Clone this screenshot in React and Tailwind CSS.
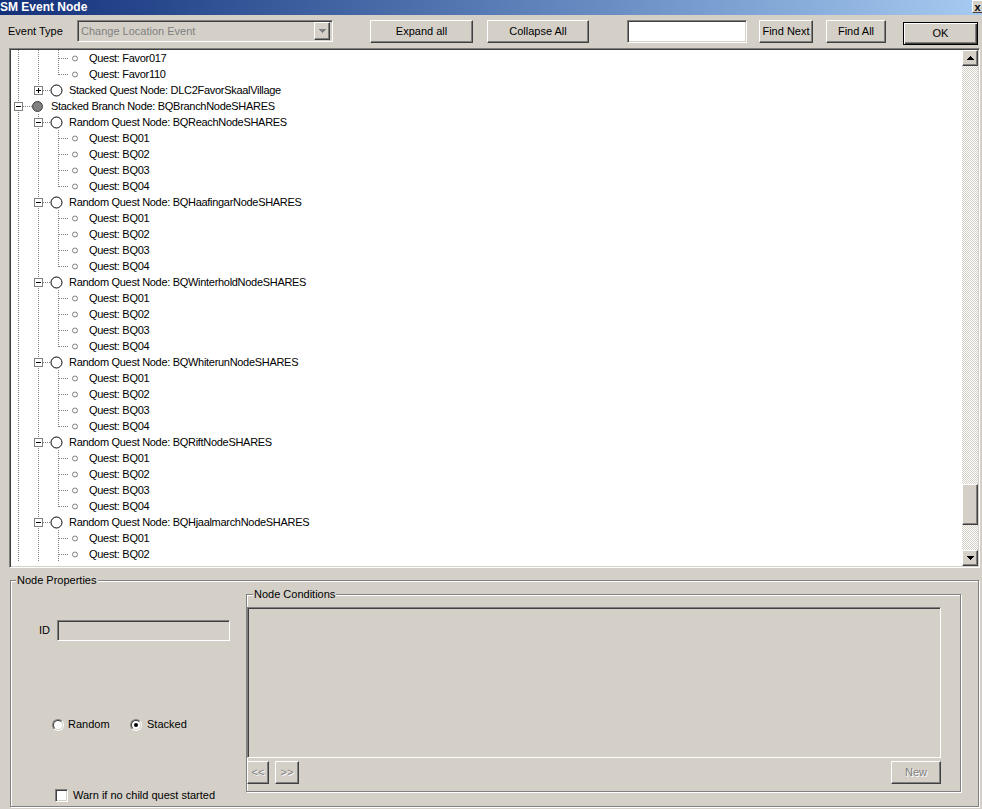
import React from "react";

const raised =
  "border border-t-white border-l-white border-r-[#404040] border-b-[#404040] shadow-[inset_-1px_-1px_0_#808080] bg-[#d4d0c8]";
const sunken =
  "border border-t-[#808080] border-l-[#808080] border-r-white border-b-white shadow-[inset_1px_1px_0_#404040,inset_-1px_-1px_0_#d4d0c8]";
const disabledText = "text-[#808080] [text-shadow:1px_1px_0_#fff]";

const regions = ["Reach", "Haafingar", "Winterhold", "Whiterun", "Rift", "Hjaalmarch"];

const rows = [
  { level: 2, label: "Quest: Favor017", guides: [true, true] },
  { level: 2, label: "Quest: Favor110", guides: [true, true], last: true },
  {
    level: 1,
    label: "Stacked Quest Node: DLC2FavorSkaalVillage",
    guides: [true],
    last: true,
    exp: "+",
  },
  { level: 0, label: "Stacked Branch Node: BQBranchNodeSHARES", guides: [], exp: "-" },
  ...regions.flatMap((r, i) => {
    const quests = i === regions.length - 1 ? ["BQ01", "BQ02"] : ["BQ01", "BQ02", "BQ03", "BQ04"];
    return [
      { level: 1, label: `Random Quest Node: BQ${r}NodeSHARES`, guides: [true], exp: "-" },
      ...quests.map((q, j) => ({
        level: 2,
        label: `Quest: ${q}`,
        guides: [true, true],
        last: i !== regions.length - 1 && j === quests.length - 1,
      })),
    ];
  }),
];

// x of each level's guide line, inside the row glyph area
const LINE_X = [7, 27, 47];
const GLYPH_W = [40, 58, 78];

function TreeGlyphs({ row }) {
  const L = row.level;
  const x = LINE_X[L] + 0.5;
  const dot = { stroke: "#808080", strokeDasharray: "1 1", shapeRendering: "crispEdges" };
  const connectorEnd = L === 0 ? 21 : L === 1 ? 40 : 57;
  return (
    <svg width={GLYPH_W[L]} height={16} className="shrink-0">
      {row.guides.map((g, i) =>
        g ? <line key={i} x1={LINE_X[i] + 0.5} y1={0} x2={LINE_X[i] + 0.5} y2={16} {...dot} /> : null
      )}
      <line x1={x} y1={0} x2={x} y2={row.last ? 9 : 16} {...dot} />
      <line x1={LINE_X[L] + 1} y1={8.5} x2={connectorEnd} y2={8.5} {...dot} />
      {row.exp && (
        <g shapeRendering="crispEdges">
          <rect x={LINE_X[L] - 4 + 0.5} y={4.5} width={8} height={8} fill="#fff" stroke="#808080" />
          <line x1={LINE_X[L] - 2} y1={8.5} x2={LINE_X[L] + 3} y2={8.5} stroke="#000" />
          {row.exp === "+" && <line x1={x} y1={6} x2={x} y2={11} stroke="#000" />}
        </g>
      )}
      {L === 0 && <circle cx={26.5} cy={8.5} r={5} fill="#808080" stroke="#404040" />}
      {L === 1 && <circle cx={45.5} cy={8.5} r={5.5} fill="#fff" stroke="#000" />}
      {L === 2 && <circle cx={64} cy={8.5} r={2.5} fill="#fff" stroke="#808080" />}
    </svg>
  );
}

function Arrow({ up, color = "#000" }) {
  const rects = [0, 1, 2, 3].map((i) => {
    const y = up ? i : 3 - i;
    return <rect key={i} x={3 - i} y={y} width={1 + 2 * i} height={1} fill={color} />;
  });
  return (
    <svg width={7} height={4} shapeRendering="crispEdges">
      {rects}
    </svg>
  );
}

function Radio({ checked }) {
  return (
    <div className="w-[12px] h-[12px] rounded-full border border-t-[#808080] border-l-[#808080] border-r-white border-b-white">
      <div className="w-full h-full rounded-full border border-t-[#404040] border-l-[#404040] border-r-[#d4d0c8] border-b-[#d4d0c8] bg-white flex items-center justify-center">
        {checked && <div className="w-[4px] h-[4px] rounded-full bg-black" />}
      </div>
    </div>
  );
}

export default function App() {
  return (
    <div className="w-[982px] h-[809px] overflow-hidden bg-[#d4d0c8] text-[11px] text-black font-['Liberation_Sans',Arial,sans-serif] flex flex-col">
      {/* caption bar */}
      <div className="h-[15px] shrink-0 flex items-start bg-linear-to-r from-[#14307a] to-[#a6caf0]">
        <span className="font-bold text-white leading-[14px] text-[12px]">SM Event Node</span>
        <div className="ml-auto w-[10px] h-[13px] border-t border-l border-t-white border-l-white border-b border-b-[#404040] bg-[#d4d0c8] flex items-center justify-center font-bold text-[11px] leading-[10px]">
          x
        </div>
      </div>

      {/* toolbar */}
      <div className="h-[33px] shrink-0 flex items-start pt-[5px]">
        <div className="w-[77px] pl-[8px] leading-[23px]">Event Type</div>
        <div className={`w-[256px] h-[22px] ${sunken} flex items-center pl-[2px] pr-[2px]`}>
          <span className="flex-1 pl-[1px] text-[#808080]">Change Location Event</span>
          <div className={`w-[16px] h-[18px] ${raised} flex items-center justify-center`}>
            <svg width={7} height={4} shapeRendering="crispEdges">
              {[0, 1, 2, 3].map((i) => (
                <rect key={i} x={i} y={i} width={7 - 2 * i} height={1} fill="#808080" />
              ))}
            </svg>
          </div>
        </div>
        <button className={`ml-[37px] w-[103px] h-[23px] ${raised} leading-[21px]`}>Expand all</button>
        <button className={`ml-[14px] w-[102px] h-[23px] ${raised} leading-[21px]`}>Collapse All</button>
        <div className={`ml-[38px] w-[120px] h-[23px] ${sunken} bg-white`} />
        <button className={`ml-[12px] w-[54px] h-[23px] ${raised} leading-[21px]`}>Find Next</button>
        <button className={`ml-[13px] w-[60px] h-[23px] ${raised} leading-[21px]`}>Find All</button>
        <button className="ml-[17px] mt-[2px] w-[75px] h-[23px] border border-black bg-[#d4d0c8] shadow-[inset_1px_1px_0_#fff,inset_-1px_-1px_0_#404040,inset_-2px_-2px_0_#808080] leading-[21px]">
          OK
        </button>
      </div>

      {/* node tree */}
      <div className={`ml-[9px] w-[971px] h-[520px] shrink-0 ${sunken} bg-white p-[1px] flex`}>
        <div className="flex-1 overflow-hidden flex flex-col">
          {rows.map((row, i) => (
            <div key={i} className="h-[16px] shrink-0 flex items-center whitespace-nowrap">
              <TreeGlyphs row={row} />
              <span className="leading-[16px] tracking-[-0.3px]">{row.label}</span>
            </div>
          ))}
        </div>
        <div className="w-[16px] flex flex-col">
          <div className={`h-[16px] shrink-0 ${raised} flex items-center justify-center`}>
            <Arrow up />
          </div>
          <div className="flex-1 flex flex-col [background-image:repeating-conic-gradient(#fff_0%_25%,#d4d0c8_0%_50%)] [background-size:2px_2px]">
            <div className="h-[418px] shrink-0" />
            <div className={`h-[41px] shrink-0 ${raised}`} />
          </div>
          <div className={`h-[16px] shrink-0 ${raised} flex items-center justify-center`}>
            <Arrow />
          </div>
        </div>
      </div>

      {/* node properties */}
      <fieldset className="mt-[6px] ml-[10px] w-[969px] h-[233px] shrink-0 border border-[#808080] shadow-[inset_1px_1px_0_#fff,1px_1px_0_#fff]">
        <legend className="ml-[5px] px-[1px] leading-[13px] bg-[#d4d0c8]">Node Properties</legend>
        <div className="flex items-start">
          <div className="w-[235px] shrink-0 flex flex-col">
            <div className="mt-[33px] ml-[28px] flex items-center">
              <span className="w-[18px]">ID</span>
              <div className={`w-[173px] h-[21px] ${sunken}`} />
            </div>
            <div className="mt-[77px] ml-[41px] h-[13px] flex items-center">
              <div className="w-[78px] flex items-center">
                <Radio />
                <span className="ml-[4px]">Random</span>
              </div>
              <div className="flex items-center">
                <Radio checked />
                <span className="ml-[5px]">Stacked</span>
              </div>
            </div>
            <div className="mt-[56px] ml-[44px] flex items-center">
              <div className={`w-[13px] h-[13px] ${sunken} bg-white`} />
              <span className="ml-[5px]">Warn if no child quest started</span>
            </div>
          </div>

          <fieldset className="mt-[1px] w-[715px] h-[204px] shrink-0 border border-[#808080] shadow-[inset_1px_1px_0_#fff,1px_1px_0_#fff]">
            <legend className="ml-[6px] px-[1px] leading-[13px] bg-[#d4d0c8]">Node Conditions</legend>
            <div className="w-[694px] flex flex-col">
              <div className={`mt-[6px] h-[151px] ${sunken}`} />
              <div className="mt-[3px] flex items-center">
                <button className={`w-[22px] h-[23px] ${raised} ${disabledText} leading-[21px]`}>&lt;&lt;</button>
                <button className={`ml-[6px] w-[24px] h-[23px] ${raised} ${disabledText} leading-[21px]`}>&gt;&gt;</button>
                <button className={`ml-auto w-[50px] h-[23px] ${raised} ${disabledText} leading-[21px]`}>New</button>
              </div>
            </div>
          </fieldset>
        </div>
      </fieldset>
    </div>
  );
}
